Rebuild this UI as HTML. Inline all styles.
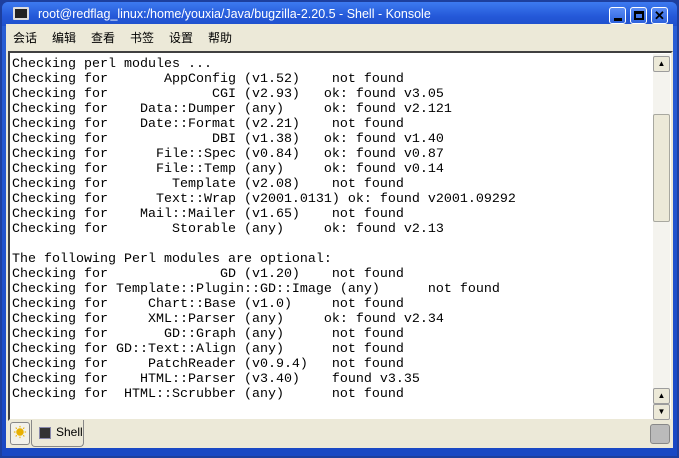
<!DOCTYPE html>
<html><head><meta charset="utf-8"><style>
*{margin:0;padding:0;box-sizing:border-box}
body{width:679px;height:458px;overflow:hidden;background:#1d3f9e;position:relative;font-family:"Liberation Sans","Noto Sans CJK SC",sans-serif}
.win{position:absolute;left:2px;top:2px;width:675px;height:454px;background:linear-gradient(#2a5fd6,#1948c4);border-radius:6px 6px 0 0}
.title{position:absolute;left:0;top:0;width:675px;height:24px;background:linear-gradient(#3d7af0,#2458d8 60%,#1f50cc);border-radius:6px 6px 0 0}
.title span{position:absolute;left:36px;top:5px;color:#fff;font-size:12.5px}
.ticon{position:absolute;left:11px;top:5px;width:16px;height:13px;background:#222;border:2px solid #ddd;border-radius:1px}
.btn{position:absolute;top:5px;width:17px;height:17px;border:1px solid #fff;border-radius:3px;background:linear-gradient(#5b8cf5,#2d62dc)}
.frame{position:absolute;left:4px;top:22px;width:667px;height:424px;background:#ece9d8}
.menu span{position:absolute;top:5px;font-size:12px;color:#000}
.term{position:absolute;left:2px;top:27px;width:665px;height:370px;background:#fff;border:2px solid #404040;border-right-color:#ece9d8;border-bottom-color:#ece9d8}
pre{position:absolute;left:2px;top:4px;font-family:"Liberation Mono",monospace;font-size:13.33px;line-height:15px;color:#000}
.sb{position:absolute;left:647px;top:30px;width:17px;height:366px;background:#f4f3ee}
.sbb{position:absolute;left:0;width:17px;height:16px;background:#ece9d8;border:1px solid #9d9d9d;border-radius:2px;font-size:8px;text-align:center;line-height:14px}
.tab{position:absolute;background:#ece9d8;border:1px solid #888;border-radius:3px}
</style></head><body>
<div class="win">
<div class="title"><div class="ticon"></div><span>root@redflag_linux:/home/youxia/Java/bugzilla-2.20.5 - Shell - Konsole</span>
<div class="btn" style="left:607px"><div style="position:absolute;left:4px;top:10px;width:8px;height:3px;background:#000"></div></div>
<div class="btn" style="left:628px"><div style="position:absolute;left:3px;top:3px;width:10px;height:9px;border:2px solid #000;border-top-width:3px"></div></div>
<div class="btn" style="left:649px;font-weight:bold;font-size:13px;text-align:center;line-height:15px">✕</div>
</div>
<div class="frame">
<div class="menu"><span style="left:7px">会话</span><span style="left:46px">编辑</span><span style="left:85px">查看</span><span style="left:124px">书签</span><span style="left:163px">设置</span><span style="left:202px">帮助</span></div>
<div class="term"><pre>Checking perl modules ...
Checking for       AppConfig (v1.52)    not found
Checking for             CGI (v2.93)   ok: found v3.05
Checking for    Data::Dumper (any)     ok: found v2.121
Checking for    Date::Format (v2.21)    not found
Checking for             DBI (v1.38)   ok: found v1.40
Checking for      File::Spec (v0.84)   ok: found v0.87
Checking for      File::Temp (any)     ok: found v0.14
Checking for        Template (v2.08)    not found
Checking for      Text::Wrap (v2001.0131) ok: found v2001.09292
Checking for    Mail::Mailer (v1.65)    not found
Checking for        Storable (any)     ok: found v2.13

The following Perl modules are optional:
Checking for              GD (v1.20)    not found
Checking for Template::Plugin::GD::Image (any)      not found
Checking for     Chart::Base (v1.0)     not found
Checking for     XML::Parser (any)     ok: found v2.34
Checking for       GD::Graph (any)      not found
Checking for GD::Text::Align (any)      not found
Checking for     PatchReader (v0.9.4)   not found
Checking for    HTML::Parser (v3.40)    found v3.35
Checking for  HTML::Scrubber (any)      not found</pre></div>
<div class="sb">
<div class="sbb" style="top:2px">▲</div>
<div style="position:absolute;left:0;top:60px;width:17px;height:108px;background:#ece9d8;border:1px solid #a8a8a0;border-radius:2px"></div>
<div class="sbb" style="top:334px">▲</div>
<div class="sbb" style="top:350px">▼</div>
</div>
<div class="tab" style="left:4px;top:398px;width:20px;height:23px;background:#f2f1ea;text-align:center;font-size:13px;line-height:20px;color:#e8b000">☀</div>
<div class="tab" style="left:25px;top:396px;width:53px;height:27px;border-top:none;border-radius:0 0 4px 4px;background:#ece9d8"><div style="position:absolute;left:7px;top:7px;width:12px;height:12px;background:#333;border:1px solid #88a"></div><span style="position:absolute;left:24px;top:5px;font-size:12px">Shell</span></div>
<div class="tab" style="left:644px;top:400px;width:20px;height:20px;background:#bbb"></div>
</div>
</div>
</body></html>
